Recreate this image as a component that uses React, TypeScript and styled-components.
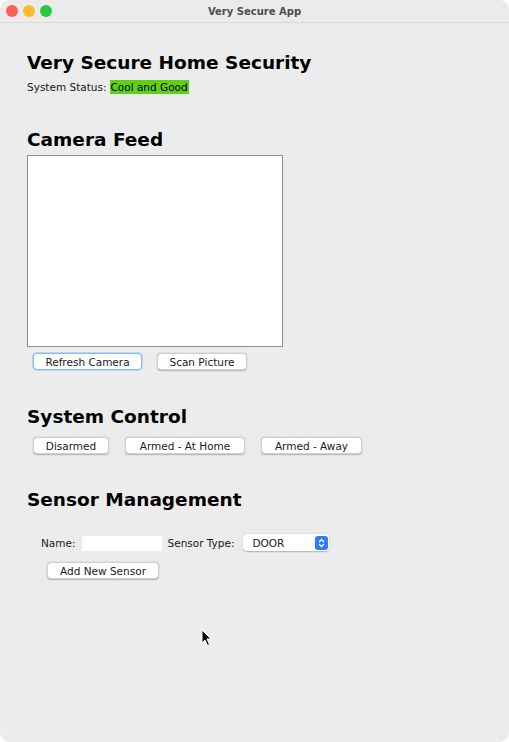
import React from "react";
import styled, { createGlobalStyle } from "styled-components";

const Global = createGlobalStyle`
  html, body { margin: 0; padding: 0; background: #ffffff; }
  body { font-family: "DejaVu Sans", "Noto Sans", sans-serif; }
  * { box-sizing: border-box; }
`;

const Window = styled.div`
  width: 509px;
  height: 742px;
  background: #ececec;
  border-radius: 10px;
  overflow: hidden;
  display: flex;
  flex-direction: column;
  position: relative;
`;

const TitleBar = styled.div`
  height: 23px;
  flex: none;
  background: #ebebeb;
  border-bottom: 1px solid #d8d8d8;
  display: flex;
  align-items: center;
  position: relative;
  padding-left: 6px;
`;

const Lights = styled.div`
  display: flex;
  gap: 5px;
`;

const Light = styled.span<{ $c: string }>`
  width: 12px;
  height: 12px;
  border-radius: 50%;
  background: ${(p) => p.$c};
`;

const Title = styled.div`
  position: absolute;
  left: 0;
  right: 0;
  text-align: center;
  font-family: "DejaVu Sans", sans-serif;
  font-weight: bold;
  font-size: 10px;
  color: #4d4d4d;
`;

const Content = styled.div`
  padding: 26px 0 0 27px;
  display: flex;
  flex-direction: column;
`;

const Heading = styled.h1<{ $mt: number }>`
  margin: ${(p) => p.$mt}px 0 0 0;
  font-size: 18.5px;
  font-weight: bold;
  color: #000;
  line-height: 28px;
  height: 28px;
`;

const StatusLine = styled.div`
  font-size: 10.5px;
  color: #1a1a1a;
  line-height: 14px;
  margin-top: 3px;
  display: flex;
  align-items: center;
`;

const StatusBadge = styled.span`
  background: #5fcf17;
  color: #000;
  padding: 0 1px;
  margin-left: 3px;
`;

const CameraBox = styled.div`
  width: 256px;
  height: 192px;
  background: #ffffff;
  border: 1px solid #8d8d8d;
  margin-top: 1px;
`;

const ButtonRow = styled.div<{ $mt: number; $pl: number; $gap: number }>`
  display: flex;
  gap: ${(p) => p.$gap}px;
  margin-top: ${(p) => p.$mt}px;
  padding-left: ${(p) => p.$pl}px;
`;

const Button = styled.button<{ $w: number; $focus?: boolean }>`
  width: ${(p) => p.$w}px;
  height: 17px;
  background: #ffffff;
  border: ${(p) => (p.$focus ? "1px solid #8ab8e8" : "0.5px solid #d0d0d0")};
  box-shadow: ${(p) =>
    p.$focus ? "0 0 0 1px #b9d6f5" : "0 0.5px 1.5px rgba(0,0,0,0.25)"};
  border-radius: 4px;
  font-family: "DejaVu Sans", sans-serif;
  font-size: 10.5px;
  color: #1a1a1a;
  padding: 0;
  display: flex;
  align-items: center;
  justify-content: center;
`;

const FormRow = styled.div`
  display: flex;
  align-items: center;
  margin-top: 20px;
  padding-left: 14px;
  font-size: 10.5px;
  color: #1a1a1a;
`;

const Label = styled.span<{ $ml: number }>`
  margin-left: ${(p) => p.$ml}px;
`;

const TextInput = styled.div`
  width: 80px;
  height: 16px;
  background: #fff;
  margin-left: 6px;
  box-shadow: inset 0 0.5px 1px rgba(0,0,0,0.15);
`;

const Select = styled.div`
  width: 86px;
  height: 17px;
  background: #fff;
  margin-left: 8px;
  border-radius: 4px;
  box-shadow: 0 0.5px 1.5px rgba(0,0,0,0.25);
  display: flex;
  align-items: center;
  justify-content: space-between;
  padding: 0 1px 0 10px;
  font-size: 10.5px;
`;

const Stepper = styled.span`
  width: 13px;
  height: 14px;
  border-radius: 3px;
  background: #2f7df6;
  display: flex;
  align-items: center;
  justify-content: center;
`;

const Cursor = styled.svg`
  position: absolute;
  left: 201px;
  top: 629px;
`;

export default function App() {
  return (
    <>
      <Global />
      <Window>
        <TitleBar>
          <Lights>
            <Light $c="#fe5f57" />
            <Light $c="#febc2e" />
            <Light $c="#28c840" />
          </Lights>
          <Title>Very Secure App</Title>
        </TitleBar>
        <Content>
          <Heading $mt={0}>Very Secure Home Security</Heading>
          <StatusLine>
            System Status:<StatusBadge>Cool and Good</StatusBadge>
          </StatusLine>
          <Heading $mt={32}>Camera Feed</Heading>
          <CameraBox />
          <ButtonRow $mt={6} $pl={6} $gap={15}>
            <Button $w={109} $focus>Refresh Camera</Button>
            <Button $w={90}>Scan Picture</Button>
          </ButtonRow>
          <Heading $mt={33}>System Control</Heading>
          <ButtonRow $mt={6} $pl={6} $gap={16}>
            <Button $w={76}>Disarmed</Button>
            <Button $w={120}>Armed - At Home</Button>
            <Button $w={101}>Armed - Away</Button>
          </ButtonRow>
          <Heading $mt={32}>Sensor Management</Heading>
          <FormRow>
            <Label $ml={0}>Name:</Label>
            <TextInput />
            <Label $ml={6}>Sensor Type:</Label>
            <Select>
              DOOR
              <Stepper>
                <svg width="7" height="10" viewBox="0 0 7 10">
                  <path d="M1 4 L3.5 1.5 L6 4 M1 6 L3.5 8.5 L6 6" stroke="#fff" strokeWidth="1.3" fill="none" />
                </svg>
              </Stepper>
            </Select>
          </FormRow>
          <ButtonRow $mt={11} $pl={20} $gap={0}>
            <Button $w={112}>Add New Sensor</Button>
          </ButtonRow>
        </Content>
        <Cursor width="12" height="18" viewBox="0 0 12 18">
          <path d="M1 1 L1 14 L4 11 L6.5 16.5 L8.5 15.5 L6 10 L10 10 Z" fill="#000" stroke="#fff" strokeWidth="1" />
        </Cursor>
      </Window>
    </>
  );
}
